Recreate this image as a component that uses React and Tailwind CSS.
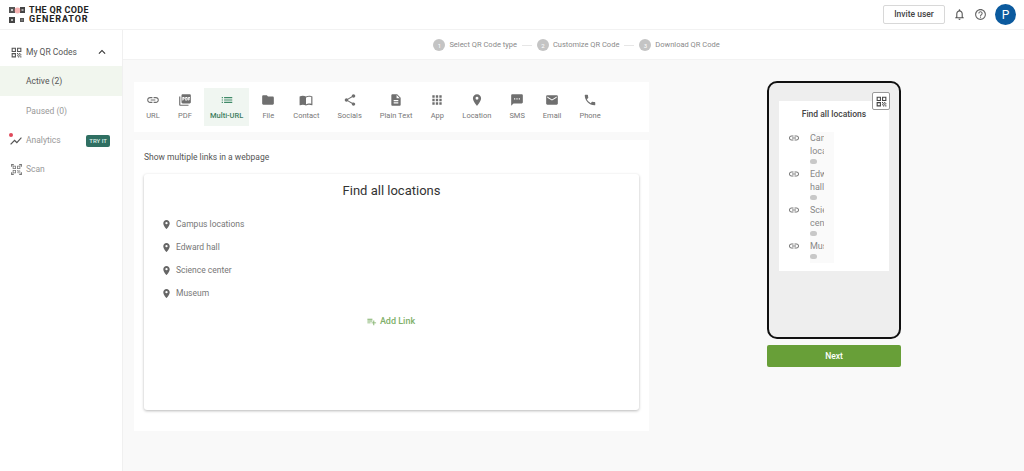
import React from 'react';
import {
  MdLink, MdPictureAsPdf, MdList, MdFolder, MdImportContacts, MdShare, MdDescription,
  MdApps, MdLocationOn, MdSms, MdEmail, MdPhone, MdPlaylistAdd, MdOutlineNotifications,
  MdHelpOutline, MdExpandLess, MdQrCode, MdOutlineQrCodeScanner, MdShowChart,
} from 'react-icons/md';

const tabs = [
  { label: 'URL', icon: MdLink },
  { label: 'PDF', icon: MdPictureAsPdf },
  { label: 'Multi-URL', icon: MdList, active: true },
  { label: 'File', icon: MdFolder },
  { label: 'Contact', icon: MdImportContacts },
  { label: 'Socials', icon: MdShare },
  { label: 'Plain Text', icon: MdDescription },
  { label: 'App', icon: MdApps },
  { label: 'Location', icon: MdLocationOn },
  { label: 'SMS', icon: MdSms },
  { label: 'Email', icon: MdEmail },
  { label: 'Phone', icon: MdPhone },
];

const links = ['Campus locations', 'Edward hall', 'Science center', 'Museum'];
const steps = ['Select QR Code type', 'Customize QR Code', 'Download QR Code'];

const Logo = () => (
  <div className="flex items-center gap-[4px]">
    <svg width="16" height="16" viewBox="0 0 16 16">
      <rect x="0" y="0" width="6" height="6" fill="#555" />
      <rect x="2" y="2" width="2" height="2" fill="#ccc" />
      <rect x="11" y="0" width="5" height="6" fill="#444" />
      <rect x="12.5" y="2" width="2" height="2" fill="#aaa" />
      <rect x="0" y="10" width="6" height="6" fill="#444" />
      <rect x="2" y="12" width="2" height="2" fill="#bbb" />
      <rect x="11" y="11" width="4" height="4" fill="#555" />
      <rect x="12.5" y="12.5" width="1" height="1" fill="#ddd" />
      <circle cx="8.5" cy="3.5" r="3" fill="#f06a6a" opacity="0.5" />
    </svg>
    <div className="font-['Roboto',sans-serif] text-[9px] font-bold leading-[9px] text-[#222]">
      <div className="tracking-[0.3px]">THE QR CODE</div>
      <div className="tracking-[0.9px]">GENERATOR</div>
    </div>
  </div>
);

const Header = () => (
  <header className="flex h-[30px] items-center justify-between border-b border-[#f2f2f2] bg-white pl-[9px] pr-[8px]">
    <Logo />
    <div className="flex items-center">
      <button className="h-[19px] w-[62px] rounded-[2px] border border-[#d8d8d8] text-[8.5px] font-medium text-[#444]">
        Invite user
      </button>
      <MdOutlineNotifications className="ml-[8px] text-[13px] text-[#555]" />
      <MdHelpOutline className="ml-[8px] text-[13px] text-[#666]" />
      <div className="ml-[8px] flex h-[21px] w-[21px] items-center justify-center rounded-full bg-[#0b5a9e] text-[12px] text-white">
        P
      </div>
    </div>
  </header>
);

const Sidebar = () => (
  <aside className="flex w-[123px] shrink-0 flex-col border-r border-[#f0f0f0] bg-white pt-[6px] text-[8.5px]">
    <div className="flex h-[30px] items-center pl-[10px] pr-[13px] pt-[2px] text-[#555]">
      <MdQrCode className="text-[13px]" />
      <span className="ml-[3px]">My QR Codes</span>
      <MdExpandLess className="ml-auto text-[14px] text-[#333]" />
    </div>
    <div className="flex h-[30px] items-center bg-[#f1f6ee] pl-[26px] pt-[1px] text-[#555]">Active (2)</div>
    <div className="flex h-[29px] items-center pl-[26px] pt-[1px] text-[#999]">Paused (0)</div>
    <div className="relative flex h-[30px] items-center pl-[9px] pr-[12px] pt-[1px] text-[#999]">
      <MdShowChart className="text-[14px] text-[#555]" />
      <span className="ml-[3px]">Analytics</span>
      <span className="ml-auto rounded-[2px] bg-[#2f6f62] px-[3px] py-[2px] text-[6px] font-medium leading-[8px] text-[#dcefe9]">
        TRY IT
      </span>
      <span className="absolute left-[9px] top-[8px] h-[4px] w-[4px] rounded-full bg-[#e0485a]" />
    </div>
    <div className="flex h-[29px] items-center pl-[10px] text-[#999]">
      <MdOutlineQrCodeScanner className="text-[13px] text-[#777]" />
      <span className="ml-[3px]">Scan</span>
    </div>
  </aside>
);

const Stepper = () => (
  <div className="flex h-[30px] items-center justify-center gap-[4px] border-b border-[#f2f2f2] bg-white pl-[6px] pt-[1px] text-[7.5px] text-[#8a8a8a]">
    {steps.map((step, i) => (
      <React.Fragment key={step}>
        <span className="flex h-[12px] w-[12px] items-center justify-center rounded-full bg-[#c4c4c4] text-[6px] text-white">
          {i + 1}
        </span>
        <span className="whitespace-nowrap">{step}</span>
        {i < steps.length - 1 && <span className="mx-px h-px w-[10px] bg-[#e6e6e6]" />}
      </React.Fragment>
    ))}
  </div>
);

const TabBar = () => (
  <div className="flex h-[50px] items-center gap-[6px] bg-white pl-[6px]">
    {tabs.map(({ label, icon: Icon, active }) => (
      <div
        key={label}
        className={`flex h-[38px] flex-col items-center justify-center px-[6px] text-[7.5px] ${
          active ? 'bg-[#f0f6f1] font-medium text-[#3f7d5f]' : 'text-[#777]'
        }`}
      >
        <Icon className={`text-[14px] ${active ? 'text-[#3f8a68]' : 'text-[#6f6f6f]'}`} />
        <span className="mt-[3px] whitespace-nowrap leading-[12px]">{label}</span>
      </div>
    ))}
  </div>
);

const Editor = () => (
  <div className="mt-[8px] h-[291px] bg-white pl-[10px] pr-[10px] pt-[11px]">
    <p className="text-[8.5px] leading-[12px] text-[#555]">Show multiple links in a webpage</p>
    <div className="mt-[11px] h-[236px] rounded-[3px] bg-white pt-[8px] shadow-[0_1px_3px_rgba(0,0,0,0.28)]">
      <h2 className="text-center text-[13px] leading-[18px] text-[#333]">Find all locations</h2>
      <ul className="mt-[13px] pl-[17px]">
        {links.map((link) => (
          <li key={link} className="flex h-[23px] items-center text-[8.5px] text-[#777]">
            <MdLocationOn className="text-[11px] text-[#666]" />
            <span className="ml-[4px]">{link}</span>
          </li>
        ))}
      </ul>
      <div className="mt-[10px] flex items-center justify-center pr-[2px] text-[9px] font-medium text-[#7fb069]">
        <MdPlaylistAdd className="text-[11px]" />
        <span className="ml-[3px]">Add Link</span>
      </div>
    </div>
  </div>
);

const Preview = () => (
  <div className="w-[134px]">
    <div className="relative h-[258px] rounded-[10px] border-2 border-[#111] bg-[#eeeeee] px-[10px] pt-[18px]">
      <div className="h-[170px] bg-white">
        <div className="pt-[7px] text-center text-[8.5px] font-medium leading-[12px] text-[#444]">Find all locations</div>
        <div className="mt-[12px] flex pl-[9px]">
          <div className="w-[22px]">
            {links.map((link, i) => (
              <div key={link} className={i === 3 ? 'h-[23px]' : 'h-[36px]'}>
                <MdLink className="text-[12px] text-[#777]" />
              </div>
            ))}
          </div>
          <div className="w-[24px] bg-[#fafafa]">
            {links.map((link) => (
              <div key={link} className="pb-[4px]">
                <div className="w-[14px] overflow-hidden text-[9px] leading-[13px] text-[#888]">{link}</div>
                <div className="mt-px h-[5px] w-[7px] rounded-full bg-[#c8c8c8]" />
              </div>
            ))}
          </div>
        </div>
      </div>
      <div className="absolute right-[9px] top-[9px] flex h-[18px] w-[18px] items-center justify-center rounded-[2px] border border-[#999] bg-white">
        <MdQrCode className="text-[13px] text-[#444]" />
      </div>
    </div>
    <button className="mt-[6px] h-[22px] w-full rounded-[2px] bg-[#689f38] text-[8.5px] font-medium text-white">
      Next
    </button>
  </div>
);

export default function App() {
  return (
    <div className="flex h-[471px] w-[1024px] flex-col overflow-hidden bg-[#f9f9f9] font-['Roboto',sans-serif]">
      <Header />
      <div className="flex flex-1">
        <Sidebar />
        <main className="flex-1">
          <Stepper />
          <div className="flex pl-[11px] pt-[22px]">
            <div className="w-[515px]">
              <TabBar />
              <Editor />
            </div>
            <div className="ml-[118px] -mt-[1px]">
              <Preview />
            </div>
          </div>
        </main>
      </div>
    </div>
  );
}
